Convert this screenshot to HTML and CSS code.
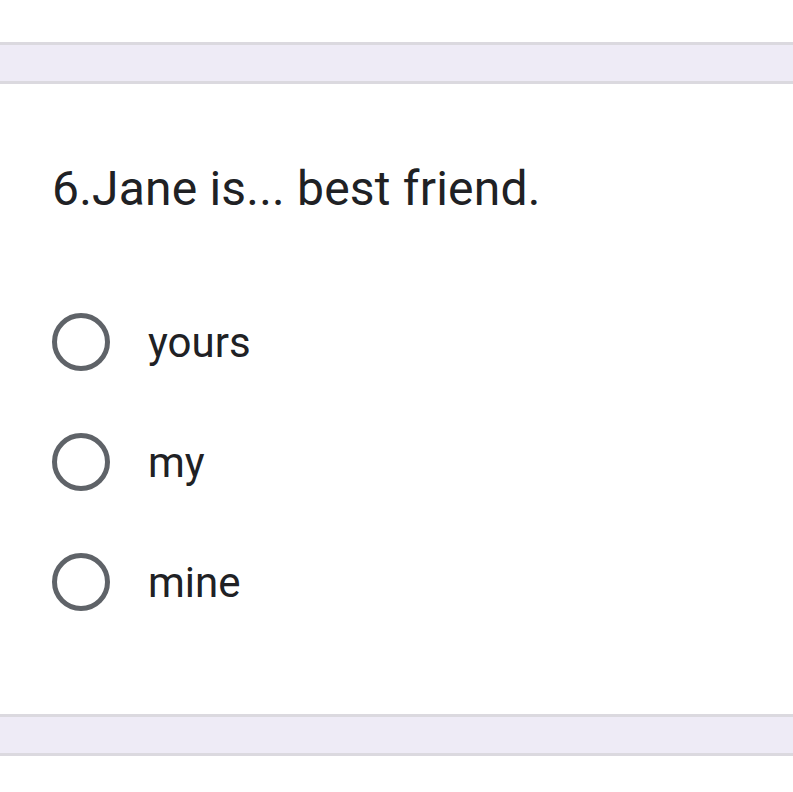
FILE: index.html
```html
<!DOCTYPE html>
<html>
<head>
<meta charset="utf-8">
<link rel="stylesheet" href="styles.css">
</head>
<body>
<div class="band band-top"></div>
<div class="card">
  <div class="question">6.Jane is... best friend.</div>
  <div class="options">
    <div class="option"><span class="radio"></span><span class="label">yours</span></div>
    <div class="option"><span class="radio"></span><span class="label">my</span></div>
    <div class="option"><span class="radio"></span><span class="label">mine</span></div>
  </div>
</div>
<div class="band band-bottom"></div>
</body>
</html>
```
FILE: styles.css
```css
html, body {
  margin: 0;
  padding: 0;
  background: #ffffff;
  font-family: Roboto, "Liberation Sans", sans-serif;
  color: #202124;
}
body {
  padding-top: 42px;
}
.band {
  height: 36px;
  background: #eeebf6;
  border-top: 3px solid #dbd9df;
  border-bottom: 3px solid #dbd9df;
}
.card {
  height: 630px;
  box-sizing: border-box;
  padding: 77px 0 0 52px;
}
.question {
  font-size: 48px;
  line-height: 56px;
  letter-spacing: 0.2px;
}
.options {
  margin-top: 96px;
  display: flex;
  flex-direction: column;
  gap: 62px;
}
.option {
  display: flex;
  align-items: center;
  height: 58px;
}
.radio {
  width: 48px;
  height: 48px;
  border: 5px solid #5f6368;
  border-radius: 50%;
  flex: none;
}
.label {
  margin-left: 38px;
  font-size: 42px;
}
```
